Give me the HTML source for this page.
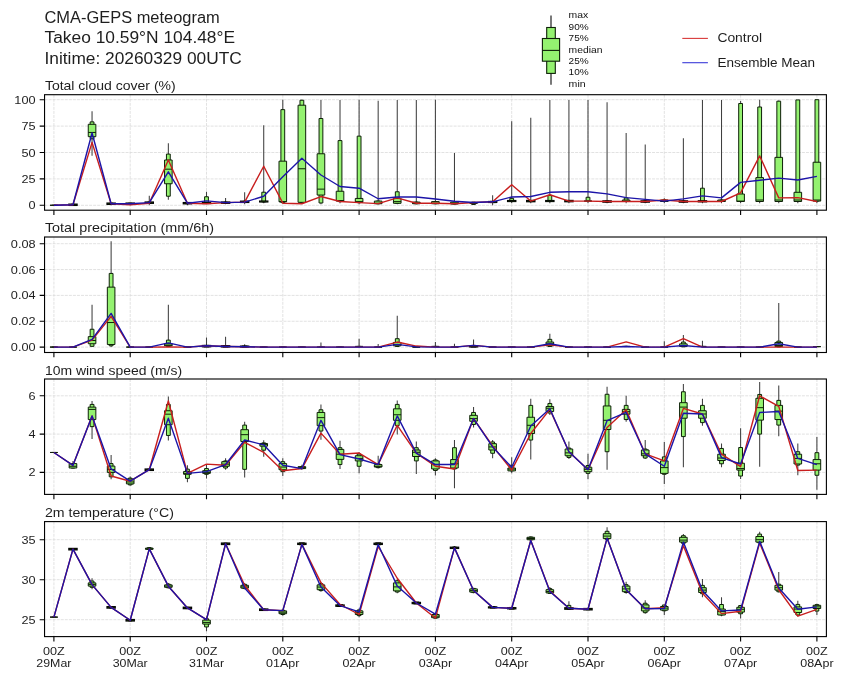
<!DOCTYPE html>
<html><head><meta charset="utf-8"><title>CMA-GEPS meteogram</title>
<style>html,body{margin:0;padding:0;background:#fff;width:844px;height:680px;overflow:hidden}
svg text{font-family:"Liberation Sans",sans-serif} svg{will-change:transform}</style></head>
<body>
<svg width="844" height="680" viewBox="0 0 844 680" style="display:block">
<rect width="844" height="680" fill="#fff"/>
<g font-family="Liberation Sans, sans-serif">
<text x="44.5" y="23" font-size="15.6" text-anchor="start" fill="#1e1e1e" textLength="175.25" lengthAdjust="spacingAndGlyphs">CMA-GEPS meteogram</text>
<text x="44.5" y="43.4" font-size="15.6" text-anchor="start" fill="#1e1e1e" textLength="190.57" lengthAdjust="spacingAndGlyphs">Takeo 10.59°N 104.48°E</text>
<text x="44.5" y="64.3" font-size="15.6" text-anchor="start" fill="#1e1e1e" textLength="197.25" lengthAdjust="spacingAndGlyphs">Initime: 20260329 00UTC</text>
<line x1="551" y1="15.6" x2="551" y2="84.8" stroke="#404040" stroke-width="1.4"/>
<rect x="546.7" y="27.5" width="8.6" height="45.9" fill="#94f270" stroke="#0e2008" stroke-width="1.1"/>
<rect x="542.4" y="38.5" width="17.2" height="22.7" fill="#94f270" stroke="#0e2008" stroke-width="1.1"/>
<line x1="542.4" y1="50.4" x2="559.6" y2="50.4" stroke="#0e2008" stroke-width="1.1"/>
<text x="568.6" y="18.4" font-size="9.2" text-anchor="start" fill="#111" textLength="19.67" lengthAdjust="spacingAndGlyphs">max</text>
<text x="568.6" y="29.77" font-size="9.2" text-anchor="start" fill="#111" textLength="20.07" lengthAdjust="spacingAndGlyphs">90%</text>
<text x="568.6" y="41.14" font-size="9.2" text-anchor="start" fill="#111" textLength="20.07" lengthAdjust="spacingAndGlyphs">75%</text>
<text x="568.6" y="52.51" font-size="9.2" text-anchor="start" fill="#111" textLength="33.85" lengthAdjust="spacingAndGlyphs">median</text>
<text x="568.6" y="63.88" font-size="9.2" text-anchor="start" fill="#111" textLength="20.07" lengthAdjust="spacingAndGlyphs">25%</text>
<text x="568.6" y="75.25" font-size="9.2" text-anchor="start" fill="#111" textLength="20.07" lengthAdjust="spacingAndGlyphs">10%</text>
<text x="568.6" y="86.62" font-size="9.2" text-anchor="start" fill="#111" textLength="17.03" lengthAdjust="spacingAndGlyphs">min</text>
<line x1="682.3" y1="38.4" x2="707.9" y2="38.4" stroke="#d83838" stroke-width="1.1"/>
<line x1="682.3" y1="62.7" x2="707.9" y2="62.7" stroke="#3a3ad8" stroke-width="1.1"/>
<text x="717.4" y="42.4" font-size="12.8" text-anchor="start" fill="#1e1e1e" textLength="44.73" lengthAdjust="spacingAndGlyphs">Control</text>
<text x="717.4" y="66.8" font-size="12.8" text-anchor="start" fill="#1e1e1e" textLength="97.74" lengthAdjust="spacingAndGlyphs">Ensemble Mean</text>
<text x="44.9" y="90.3" font-size="12.4" text-anchor="start" fill="#1e1e1e" textLength="130.8" lengthAdjust="spacingAndGlyphs">Total cloud cover (%)</text>
<path d="M53.9 94.7V210.2M130.2 94.7V210.2M206.5 94.7V210.2M282.8 94.7V210.2M359.1 94.7V210.2M435.4 94.7V210.2M511.7 94.7V210.2M588 94.7V210.2M664.3 94.7V210.2M740.6 94.7V210.2M816.9 94.7V210.2M44.55 205.3H826.4M44.55 178.9H826.4M44.55 152.5H826.4M44.55 126.1H826.4M44.55 99.7H826.4" stroke="#dadada" stroke-width="0.8" stroke-dasharray="3 1.05" fill="none"/>
<path d="M53.9 205.3V205.3M72.97 204.24V205.3M92.05 111.32V155.67M111.12 203.19V205.3M130.2 203.19V205.3M149.28 195.8V205.3M168.35 143.21V199.7M187.43 202.66V205.3M206.5 191.78V203.72M225.57 197.91V204.24M244.65 192.31V204.24M263.72 125.26V203.19M282.8 99.7V203.19M301.88 99.7V203.19M320.95 99.91V204.24M340.02 99.91V203.19M359.1 99.7V204.24M378.17 100.76V204.24M397.25 99.91V204.24M416.32 99.91V204.24M435.4 99.7V204.24M454.47 152.92V204.24M473.55 202.13V204.46M492.62 195.27V205.3M511.7 121.14V203.19M530.77 117.65V203.19M549.85 99.91V203.19M568.92 99.91V203.19M588 99.91V203.19M607.07 102.23V203.19M626.15 132.96V203.19M645.22 144.58V203.19M664.3 198.33V203.19M683.38 138.24V203.19M702.45 99.91V203.19M721.52 99.91V203.19M740.6 101.07V203.19M759.67 99.7V203.19M778.75 100.44V203.19M797.82 99.91V203.19M816.9 99.7V203.19" stroke="#404040" stroke-width="1.05" fill="none"/>
<path d="M52 205.3H55.8V205.3H52Z" fill="none" stroke="#333" stroke-width="1"/>
<path d="M50.1 205.3H57.7V205.3H50.1Z" fill="none" stroke="#333" stroke-width="1"/>
<path d="M71.07 204.24H74.88V205.3H71.07Z" fill="#94f270" stroke="#0e2008" stroke-width="1.0"/>
<path d="M69.17 204.46H76.77V205.09H69.17Z" fill="none" stroke="#000" stroke-width="1.9"/>
<path d="M90.15 121.88H93.95V138.77H90.15Z" fill="#94f270" stroke="#0e2008" stroke-width="1.0"/>
<path d="M88.25 124.3H95.85V136.66H88.25Z" fill="#94f270" stroke="#0e2008" stroke-width="1.0"/>
<path d="M109.22 203.19H113.03V204.24H109.22Z" fill="#94f270" stroke="#0e2008" stroke-width="1.0"/>
<path d="M107.33 203.4H114.92V204.03H107.33Z" fill="none" stroke="#000" stroke-width="1.9"/>
<path d="M128.3 203.19H132.1V204.24H128.3Z" fill="#94f270" stroke="#0e2008" stroke-width="1.0"/>
<path d="M126.4 203.4H134V204.03H126.4Z" fill="none" stroke="#000" stroke-width="1.9"/>
<path d="M147.38 202.13H151.18V203.19H147.38Z" fill="#94f270" stroke="#0e2008" stroke-width="1.0"/>
<path d="M145.47 202.34H153.08V202.98H145.47Z" fill="none" stroke="#000" stroke-width="1.9"/>
<path d="M166.45 154.08H170.25V196.22H166.45Z" fill="#94f270" stroke="#0e2008" stroke-width="1.0"/>
<path d="M164.55 160H172.15V183.76H164.55Z" fill="#94f270" stroke="#0e2008" stroke-width="1.0"/>
<path d="M185.53 202.66H189.33V203.72H185.53Z" fill="#94f270" stroke="#0e2008" stroke-width="1.0"/>
<path d="M183.62 202.87H191.23V203.5H183.62Z" fill="none" stroke="#000" stroke-width="1.9"/>
<path d="M204.6 196.75H208.4V203.19H204.6Z" fill="#94f270" stroke="#0e2008" stroke-width="1.0"/>
<path d="M202.7 202.87H210.3V203.19H202.7Z" fill="none" stroke="#000" stroke-width="1.9"/>
<path d="M223.67 202.13H227.47V203.19H223.67Z" fill="#94f270" stroke="#0e2008" stroke-width="1.0"/>
<path d="M221.77 202.34H229.38V202.98H221.77Z" fill="none" stroke="#000" stroke-width="1.9"/>
<path d="M242.75 201.29H246.55V202.34H242.75Z" fill="#94f270" stroke="#0e2008" stroke-width="1.0"/>
<path d="M240.85 201.5H248.45V202.13H240.85Z" fill="none" stroke="#000" stroke-width="1.9"/>
<path d="M261.82 192.21H265.62V201.92H261.82Z" fill="#94f270" stroke="#0e2008" stroke-width="1.0"/>
<path d="M259.92 201.39H267.52V201.6H259.92Z" fill="none" stroke="#000" stroke-width="1.9"/>
<path d="M280.9 109.63H284.7V202.66H280.9Z" fill="#94f270" stroke="#0e2008" stroke-width="1.0"/>
<path d="M279 161.16H286.6V201.82H279Z" fill="#94f270" stroke="#0e2008" stroke-width="1.0"/>
<path d="M299.98 100.23H303.77V202.66H299.98Z" fill="#94f270" stroke="#0e2008" stroke-width="1.0"/>
<path d="M298.07 105.19H305.68V202.34H298.07Z" fill="#94f270" stroke="#0e2008" stroke-width="1.0"/>
<path d="M319.05 118.5H322.85V202.98H319.05Z" fill="#94f270" stroke="#0e2008" stroke-width="1.0"/>
<path d="M317.15 153.77H324.75V195.06H317.15Z" fill="#94f270" stroke="#0e2008" stroke-width="1.0"/>
<path d="M338.12 140.57H341.92V201.6H338.12Z" fill="#94f270" stroke="#0e2008" stroke-width="1.0"/>
<path d="M336.22 191.26H343.82V201.08H336.22Z" fill="#94f270" stroke="#0e2008" stroke-width="1.0"/>
<path d="M357.2 136.13H361V202.66H357.2Z" fill="#94f270" stroke="#0e2008" stroke-width="1.0"/>
<path d="M355.3 198.44H362.9V202.34H355.3Z" fill="#94f270" stroke="#0e2008" stroke-width="1.0"/>
<path d="M376.27 201.08H380.07V203.72H376.27Z" fill="#94f270" stroke="#0e2008" stroke-width="1.0"/>
<path d="M374.37 201.08H381.97V203.72H374.37Z" fill="#94f270" stroke="#0e2008" stroke-width="1.0"/>
<path d="M395.35 191.78H399.15V203.29H395.35Z" fill="#94f270" stroke="#0e2008" stroke-width="1.0"/>
<path d="M393.45 198.44H401.05V203.29H393.45Z" fill="#94f270" stroke="#0e2008" stroke-width="1.0"/>
<path d="M414.43 202.13H418.22V203.72H414.43Z" fill="#94f270" stroke="#0e2008" stroke-width="1.0"/>
<path d="M412.52 202.13H420.12V203.72H412.52Z" fill="#94f270" stroke="#0e2008" stroke-width="1.0"/>
<path d="M433.5 201.6H437.3V203.72H433.5Z" fill="#94f270" stroke="#0e2008" stroke-width="1.0"/>
<path d="M431.6 201.6H439.2V203.72H431.6Z" fill="#94f270" stroke="#0e2008" stroke-width="1.0"/>
<path d="M452.57 202.13H456.37V204.03H452.57Z" fill="#94f270" stroke="#0e2008" stroke-width="1.0"/>
<path d="M450.67 202.13H458.27V204.03H450.67Z" fill="#94f270" stroke="#0e2008" stroke-width="1.0"/>
<path d="M471.65 202.13H475.45V204.46H471.65Z" fill="#94f270" stroke="#0e2008" stroke-width="1.0"/>
<path d="M469.75 203.29H477.35V203.29H469.75Z" fill="none" stroke="#333" stroke-width="1"/>
<path d="M490.72 201.82H494.52V202.13H490.72Z" fill="none" stroke="#000" stroke-width="1.9"/>
<path d="M488.82 201.82H496.42V202.13H488.82Z" fill="none" stroke="#000" stroke-width="1.9"/>
<path d="M509.8 198.33H513.6V201.08H509.8Z" fill="#94f270" stroke="#0e2008" stroke-width="1.0"/>
<path d="M507.9 200.86H515.5V201.18H507.9Z" fill="none" stroke="#000" stroke-width="1.9"/>
<path d="M528.88 200.55H532.67V201.6H528.88Z" fill="#94f270" stroke="#0e2008" stroke-width="1.0"/>
<path d="M526.98 200.76H534.57V201.39H526.98Z" fill="none" stroke="#000" stroke-width="1.9"/>
<path d="M547.95 195.37H551.75V201.08H547.95Z" fill="#94f270" stroke="#0e2008" stroke-width="1.0"/>
<path d="M546.05 200.86H553.65V201.18H546.05Z" fill="none" stroke="#000" stroke-width="1.9"/>
<path d="M567.02 200.55H570.82V201.6H567.02Z" fill="#94f270" stroke="#0e2008" stroke-width="1.0"/>
<path d="M565.12 200.76H572.72V201.39H565.12Z" fill="none" stroke="#000" stroke-width="1.9"/>
<path d="M586.1 197.27H589.9V201.08H586.1Z" fill="#94f270" stroke="#0e2008" stroke-width="1.0"/>
<path d="M584.2 201.08H591.8V201.08H584.2Z" fill="none" stroke="#333" stroke-width="1"/>
<path d="M605.17 200.97H608.97V202.03H605.17Z" fill="#94f270" stroke="#0e2008" stroke-width="1.0"/>
<path d="M603.27 201.18H610.87V201.82H603.27Z" fill="none" stroke="#000" stroke-width="1.9"/>
<path d="M624.25 197.91H628.05V201.5H624.25Z" fill="#94f270" stroke="#0e2008" stroke-width="1.0"/>
<path d="M622.35 200.02H629.95V201.5H622.35Z" fill="#94f270" stroke="#0e2008" stroke-width="1.0"/>
<path d="M643.32 200.97H647.12V202.03H643.32Z" fill="#94f270" stroke="#0e2008" stroke-width="1.0"/>
<path d="M641.42 201.18H649.02V201.82H641.42Z" fill="none" stroke="#000" stroke-width="1.9"/>
<path d="M662.4 200.02H666.2V201.5H662.4Z" fill="#94f270" stroke="#0e2008" stroke-width="1.0"/>
<path d="M660.5 200.02H668.1V201.5H660.5Z" fill="#94f270" stroke="#0e2008" stroke-width="1.0"/>
<path d="M681.48 200.97H685.27V202.03H681.48Z" fill="#94f270" stroke="#0e2008" stroke-width="1.0"/>
<path d="M679.58 201.18H687.17V201.82H679.58Z" fill="none" stroke="#000" stroke-width="1.9"/>
<path d="M700.55 188.19H704.35V201.5H700.55Z" fill="#94f270" stroke="#0e2008" stroke-width="1.0"/>
<path d="M698.65 201.08H706.25V201.5H698.65Z" fill="none" stroke="#000" stroke-width="1.9"/>
<path d="M719.62 200.02H723.42V201.5H719.62Z" fill="#94f270" stroke="#0e2008" stroke-width="1.0"/>
<path d="M717.73 200.02H725.32V201.5H717.73Z" fill="#94f270" stroke="#0e2008" stroke-width="1.0"/>
<path d="M738.7 103.5H742.5V201.5H738.7Z" fill="#94f270" stroke="#0e2008" stroke-width="1.0"/>
<path d="M736.8 194H744.4V201.5H736.8Z" fill="#94f270" stroke="#0e2008" stroke-width="1.0"/>
<path d="M757.77 106.99H761.57V201.5H757.77Z" fill="#94f270" stroke="#0e2008" stroke-width="1.0"/>
<path d="M755.88 177.63H763.47V201.5H755.88Z" fill="#94f270" stroke="#0e2008" stroke-width="1.0"/>
<path d="M776.85 101.18H780.65V201.5H776.85Z" fill="#94f270" stroke="#0e2008" stroke-width="1.0"/>
<path d="M774.95 157.36H782.55V201.5H774.95Z" fill="#94f270" stroke="#0e2008" stroke-width="1.0"/>
<path d="M795.92 99.91H799.72V201.5H795.92Z" fill="#94f270" stroke="#0e2008" stroke-width="1.0"/>
<path d="M794.02 192.31H801.62V201.5H794.02Z" fill="#94f270" stroke="#0e2008" stroke-width="1.0"/>
<path d="M815 99.7H818.8V201.08H815Z" fill="#94f270" stroke="#0e2008" stroke-width="1.0"/>
<path d="M813.1 162.22H820.7V201.08H813.1Z" fill="#94f270" stroke="#0e2008" stroke-width="1.0"/>
<path d="M50.1 205.3H57.7M69.17 204.77H76.77M88.25 132.44H95.85M107.33 203.72H114.92M126.4 203.72H134M145.47 202.66H153.08M164.55 169.18H172.15M183.62 203.19H191.23M202.7 203.08H210.3M221.77 202.66H229.38M240.85 201.82H248.45M259.92 201.6H267.52M279 201.6H286.6M298.07 168.76H305.68M317.15 189.14H324.75M336.22 200.55H343.82M355.3 201.6H362.9M374.37 203.19H381.97M393.45 201.6H401.05M412.52 203.19H420.12M431.6 203.19H439.2M450.67 203.19H458.27M469.75 203.29H477.35M488.82 202.13H496.42M507.9 201.08H515.5M526.98 201.08H534.57M546.05 201.08H553.65M565.12 201.08H572.72M584.2 201.08H591.8M603.27 201.5H610.87M622.35 201.08H629.95M641.42 201.5H649.02M660.5 201.08H668.1M679.58 201.5H687.17M698.65 201.5H706.25M717.73 201.08H725.32M736.8 201.08H744.4M755.88 200.02H763.47M774.95 200.02H782.55M794.02 200.02H801.62M813.1 200.02H820.7" stroke="#0e2008" stroke-width="1.0" fill="none"/>
<path d="M53.9 205.3L72.97 204.77L92.05 142.36L111.12 203.72L130.2 204.77L149.28 203.19L168.35 160L187.43 203.19L206.5 203.72L225.57 202.66L244.65 202.13L263.72 166.23L282.8 203.19L301.88 203.72L320.95 196.54L340.02 201.5L359.1 202.66L378.17 203.61L397.25 197.91L416.32 203.29L435.4 203.29L454.47 203.82L473.55 202.45L492.62 201.82L511.7 184.71L530.77 201.08L549.85 194.74L568.92 201.08L588 201.08L607.07 201.5L626.15 201.5L645.22 201.5L664.3 200.02L683.38 201.5L702.45 201.5L721.52 201.5L740.6 192.94L759.67 155.88L778.75 197.91L797.82 197.59L816.9 201.5" stroke="#c81e1e" stroke-width="1.4" fill="none" stroke-linejoin="round"/>
<path d="M53.9 205.3L72.97 204.77L92.05 132.96L111.12 203.72L130.2 203.72L149.28 202.66L168.35 171.82L187.43 203.19L206.5 200.86L225.57 202.66L244.65 202.13L263.72 196.22L282.8 176.79L301.88 158.2L320.95 174.99L340.02 186.5L359.1 188.19L378.17 198.75L397.25 197.06L416.32 197.06L435.4 198.96L454.47 201.18L473.55 202.45L492.62 201.82L511.7 196.96L530.77 196.54L549.85 192.31L568.92 191.78L588 191.78L607.07 193.9L626.15 197.59L645.22 199.39L664.3 201.08L683.38 198.86L702.45 195.9L721.52 197.91L740.6 182.38L759.67 180.27L778.75 178.16L797.82 179.96L816.9 176.37" stroke="#1c14a8" stroke-width="1.4" fill="none" stroke-linejoin="round"/>
<rect x="44.55" y="94.7" width="781.85" height="115.5" fill="none" stroke="#000" stroke-width="1.11"/>
<path d="M53.9 210.2v4.86M130.2 210.2v4.86M206.5 210.2v4.86M282.8 210.2v4.86M359.1 210.2v4.86M435.4 210.2v4.86M511.7 210.2v4.86M588 210.2v4.86M664.3 210.2v4.86M740.6 210.2v4.86M816.9 210.2v4.86M44.55 205.3h-4.86M44.55 178.9h-4.86M44.55 152.5h-4.86M44.55 126.1h-4.86M44.55 99.7h-4.86" stroke="#000" stroke-width="1.11" fill="none"/>
<text x="35.6" y="209.3" font-size="11.5" text-anchor="end" fill="#1e1e1e" textLength="7.07" lengthAdjust="spacingAndGlyphs">0</text>
<text x="35.6" y="182.9" font-size="11.5" text-anchor="end" fill="#1e1e1e" textLength="14.14" lengthAdjust="spacingAndGlyphs">25</text>
<text x="35.6" y="156.5" font-size="11.5" text-anchor="end" fill="#1e1e1e" textLength="14.14" lengthAdjust="spacingAndGlyphs">50</text>
<text x="35.6" y="130.1" font-size="11.5" text-anchor="end" fill="#1e1e1e" textLength="14.14" lengthAdjust="spacingAndGlyphs">75</text>
<text x="35.6" y="103.7" font-size="11.5" text-anchor="end" fill="#1e1e1e" textLength="21.21" lengthAdjust="spacingAndGlyphs">100</text>
<text x="44.9" y="232.1" font-size="12.4" text-anchor="start" fill="#1e1e1e" textLength="169.03" lengthAdjust="spacingAndGlyphs">Total precipitation (mm/6h)</text>
<path d="M53.9 237V352.5M130.2 237V352.5M206.5 237V352.5M282.8 237V352.5M359.1 237V352.5M435.4 237V352.5M511.7 237V352.5M588 237V352.5M664.3 237V352.5M740.6 237V352.5M816.9 237V352.5M44.55 347.1H826.4M44.55 321.25H826.4M44.55 295.4H826.4M44.55 269.55H826.4M44.55 243.7H826.4" stroke="#dadada" stroke-width="0.8" stroke-dasharray="3 1.05" fill="none"/>
<path d="M53.9 347.1V347.1M72.97 347.1V347.1M92.05 304.84V347.1M111.12 241.24V347.1M130.2 347.1V347.1M149.28 347.1V347.1M168.35 304.84V347.1M187.43 347.1V347.1M206.5 337.54V347.1M225.57 336.76V347.1M244.65 344.26V347.1M263.72 347.1V347.1M282.8 347.1V347.1M301.88 347.1V347.1M320.95 342.45V347.1M340.02 347.1V347.1M359.1 338.7V347.1M378.17 344V347.1M397.25 315.82V347.1M416.32 347.1V347.1M435.4 341.93V347.1M454.47 343.74V347.1M473.55 339.47V347.1M492.62 347.1V347.1M511.7 347.1V347.1M530.77 347.1V347.1M549.85 333.79V347.1M568.92 347.1V347.1M588 347.1V347.1M607.07 347.1V347.1M626.15 345.81V347.1M645.22 347.1V347.1M664.3 341.15V347.1M683.38 334.95V347.1M702.45 340.64V347.1M721.52 347.1V347.1M740.6 347.1V347.1M759.67 347.1V347.1M778.75 302.9V347.1M797.82 347.1V347.1M816.9 346.45V347.1" stroke="#404040" stroke-width="1.05" fill="none"/>
<path d="M52 347.1H55.8V347.1H52Z" fill="none" stroke="#333" stroke-width="1"/>
<path d="M50.1 347.1H57.7V347.1H50.1Z" fill="none" stroke="#333" stroke-width="1"/>
<path d="M71.07 347.1H74.88V347.1H71.07Z" fill="none" stroke="#333" stroke-width="1"/>
<path d="M69.17 347.1H76.77V347.1H69.17Z" fill="none" stroke="#333" stroke-width="1"/>
<path d="M90.15 329.26H93.95V346.32H90.15Z" fill="#94f270" stroke="#0e2008" stroke-width="1.0"/>
<path d="M88.25 336.63H95.85V343.74H88.25Z" fill="#94f270" stroke="#0e2008" stroke-width="1.0"/>
<path d="M109.22 273.43H113.03V345.81H109.22Z" fill="#94f270" stroke="#0e2008" stroke-width="1.0"/>
<path d="M107.33 287.13H114.92V344.52H107.33Z" fill="#94f270" stroke="#0e2008" stroke-width="1.0"/>
<path d="M128.3 347.1H132.1V347.1H128.3Z" fill="none" stroke="#333" stroke-width="1"/>
<path d="M126.4 347.1H134V347.1H126.4Z" fill="none" stroke="#333" stroke-width="1"/>
<path d="M147.38 347.1H151.18V347.1H147.38Z" fill="none" stroke="#333" stroke-width="1"/>
<path d="M145.47 347.1H153.08V347.1H145.47Z" fill="none" stroke="#333" stroke-width="1"/>
<path d="M166.45 340.12H170.25V346.45H166.45Z" fill="#94f270" stroke="#0e2008" stroke-width="1.0"/>
<path d="M164.55 343.74H172.15V345.81H164.55Z" fill="#94f270" stroke="#0e2008" stroke-width="1.0"/>
<path d="M185.53 347.1H189.33V347.1H185.53Z" fill="none" stroke="#333" stroke-width="1"/>
<path d="M183.62 347.1H191.23V347.1H183.62Z" fill="none" stroke="#333" stroke-width="1"/>
<path d="M204.6 345.81H208.4V346.45H204.6Z" fill="none" stroke="#000" stroke-width="1.9"/>
<path d="M202.7 345.81H210.3V346.45H202.7Z" fill="none" stroke="#000" stroke-width="1.9"/>
<path d="M223.67 346.07H227.47V346.58H223.67Z" fill="none" stroke="#000" stroke-width="1.9"/>
<path d="M221.77 346.07H229.38V346.58H221.77Z" fill="none" stroke="#000" stroke-width="1.9"/>
<path d="M242.75 346.45H246.55V346.71H242.75Z" fill="none" stroke="#000" stroke-width="1.9"/>
<path d="M240.85 346.45H248.45V346.71H240.85Z" fill="none" stroke="#000" stroke-width="1.9"/>
<path d="M261.82 347.1H265.62V347.1H261.82Z" fill="none" stroke="#333" stroke-width="1"/>
<path d="M259.92 347.1H267.52V347.1H259.92Z" fill="none" stroke="#333" stroke-width="1"/>
<path d="M280.9 347.1H284.7V347.1H280.9Z" fill="none" stroke="#333" stroke-width="1"/>
<path d="M279 347.1H286.6V347.1H279Z" fill="none" stroke="#333" stroke-width="1"/>
<path d="M299.98 347.1H303.77V347.1H299.98Z" fill="none" stroke="#333" stroke-width="1"/>
<path d="M298.07 347.1H305.68V347.1H298.07Z" fill="none" stroke="#333" stroke-width="1"/>
<path d="M319.05 347.1H322.85V347.1H319.05Z" fill="none" stroke="#333" stroke-width="1"/>
<path d="M317.15 347.1H324.75V347.1H317.15Z" fill="none" stroke="#333" stroke-width="1"/>
<path d="M338.12 347.1H341.92V347.1H338.12Z" fill="none" stroke="#333" stroke-width="1"/>
<path d="M336.22 347.1H343.82V347.1H336.22Z" fill="none" stroke="#333" stroke-width="1"/>
<path d="M357.2 346.45H361V346.45H357.2Z" fill="none" stroke="#333" stroke-width="1"/>
<path d="M355.3 346.45H362.9V346.45H355.3Z" fill="none" stroke="#333" stroke-width="1"/>
<path d="M376.27 347.1H380.07V347.1H376.27Z" fill="none" stroke="#333" stroke-width="1"/>
<path d="M374.37 347.1H381.97V347.1H374.37Z" fill="none" stroke="#333" stroke-width="1"/>
<path d="M395.35 338.7H399.15V346.45H395.35Z" fill="#94f270" stroke="#0e2008" stroke-width="1.0"/>
<path d="M393.45 342.45H401.05V345.81H393.45Z" fill="#94f270" stroke="#0e2008" stroke-width="1.0"/>
<path d="M414.43 347.1H418.22V347.1H414.43Z" fill="none" stroke="#333" stroke-width="1"/>
<path d="M412.52 347.1H420.12V347.1H412.52Z" fill="none" stroke="#333" stroke-width="1"/>
<path d="M433.5 346.45H437.3V346.45H433.5Z" fill="none" stroke="#333" stroke-width="1"/>
<path d="M431.6 346.45H439.2V346.45H431.6Z" fill="none" stroke="#333" stroke-width="1"/>
<path d="M452.57 347.1H456.37V347.1H452.57Z" fill="none" stroke="#333" stroke-width="1"/>
<path d="M450.67 347.1H458.27V347.1H450.67Z" fill="none" stroke="#333" stroke-width="1"/>
<path d="M471.65 346.07H475.45V346.58H471.65Z" fill="none" stroke="#000" stroke-width="1.9"/>
<path d="M469.75 346.07H477.35V346.58H469.75Z" fill="none" stroke="#000" stroke-width="1.9"/>
<path d="M490.72 347.1H494.52V347.1H490.72Z" fill="none" stroke="#333" stroke-width="1"/>
<path d="M488.82 347.1H496.42V347.1H488.82Z" fill="none" stroke="#333" stroke-width="1"/>
<path d="M509.8 347.1H513.6V347.1H509.8Z" fill="none" stroke="#333" stroke-width="1"/>
<path d="M507.9 347.1H515.5V347.1H507.9Z" fill="none" stroke="#333" stroke-width="1"/>
<path d="M528.88 347.1H532.67V347.1H528.88Z" fill="none" stroke="#333" stroke-width="1"/>
<path d="M526.98 347.1H534.57V347.1H526.98Z" fill="none" stroke="#333" stroke-width="1"/>
<path d="M547.95 339.35H551.75V346.45H547.95Z" fill="#94f270" stroke="#0e2008" stroke-width="1.0"/>
<path d="M546.05 342.06H553.65V345.81H546.05Z" fill="#94f270" stroke="#0e2008" stroke-width="1.0"/>
<path d="M567.02 347.1H570.82V347.1H567.02Z" fill="none" stroke="#333" stroke-width="1"/>
<path d="M565.12 347.1H572.72V347.1H565.12Z" fill="none" stroke="#333" stroke-width="1"/>
<path d="M586.1 347.1H589.9V347.1H586.1Z" fill="none" stroke="#333" stroke-width="1"/>
<path d="M584.2 347.1H591.8V347.1H584.2Z" fill="none" stroke="#333" stroke-width="1"/>
<path d="M605.17 347.1H608.97V347.1H605.17Z" fill="none" stroke="#333" stroke-width="1"/>
<path d="M603.27 347.1H610.87V347.1H603.27Z" fill="none" stroke="#333" stroke-width="1"/>
<path d="M624.25 346.45H628.05V346.45H624.25Z" fill="none" stroke="#333" stroke-width="1"/>
<path d="M622.35 346.45H629.95V346.45H622.35Z" fill="none" stroke="#333" stroke-width="1"/>
<path d="M643.32 347.1H647.12V347.1H643.32Z" fill="none" stroke="#333" stroke-width="1"/>
<path d="M641.42 347.1H649.02V347.1H641.42Z" fill="none" stroke="#333" stroke-width="1"/>
<path d="M662.4 347.1H666.2V347.1H662.4Z" fill="none" stroke="#333" stroke-width="1"/>
<path d="M660.5 347.1H668.1V347.1H660.5Z" fill="none" stroke="#333" stroke-width="1"/>
<path d="M681.48 342.06H685.27V346.84H681.48Z" fill="#94f270" stroke="#0e2008" stroke-width="1.0"/>
<path d="M679.58 343.87H687.17V346.45H679.58Z" fill="#94f270" stroke="#0e2008" stroke-width="1.0"/>
<path d="M700.55 346.45H704.35V346.45H700.55Z" fill="none" stroke="#333" stroke-width="1"/>
<path d="M698.65 346.45H706.25V346.45H698.65Z" fill="none" stroke="#333" stroke-width="1"/>
<path d="M719.62 347.1H723.42V347.1H719.62Z" fill="none" stroke="#333" stroke-width="1"/>
<path d="M717.73 347.1H725.32V347.1H717.73Z" fill="none" stroke="#333" stroke-width="1"/>
<path d="M738.7 347.1H742.5V347.1H738.7Z" fill="none" stroke="#333" stroke-width="1"/>
<path d="M736.8 347.1H744.4V347.1H736.8Z" fill="none" stroke="#333" stroke-width="1"/>
<path d="M757.77 347.1H761.57V347.1H757.77Z" fill="none" stroke="#333" stroke-width="1"/>
<path d="M755.88 347.1H763.47V347.1H755.88Z" fill="none" stroke="#333" stroke-width="1"/>
<path d="M776.85 341.15H780.65V346.84H776.85Z" fill="#94f270" stroke="#0e2008" stroke-width="1.0"/>
<path d="M774.95 342.45H782.55V346.45H774.95Z" fill="#94f270" stroke="#0e2008" stroke-width="1.0"/>
<path d="M795.92 347.1H799.72V347.1H795.92Z" fill="none" stroke="#333" stroke-width="1"/>
<path d="M794.02 347.1H801.62V347.1H794.02Z" fill="none" stroke="#333" stroke-width="1"/>
<path d="M815 346.58H818.8V346.58H815Z" fill="none" stroke="#333" stroke-width="1"/>
<path d="M813.1 346.58H820.7V346.58H813.1Z" fill="none" stroke="#333" stroke-width="1"/>
<path d="M50.1 347.1H57.7M69.17 347.1H76.77M88.25 340.51H95.85M107.33 322.54H114.92M126.4 347.1H134M145.47 347.1H153.08M164.55 345.16H172.15M183.62 347.1H191.23M202.7 346.07H210.3M221.77 346.32H229.38M240.85 346.58H248.45M259.92 347.1H267.52M279 347.1H286.6M298.07 347.1H305.68M317.15 347.1H324.75M336.22 347.1H343.82M355.3 346.45H362.9M374.37 347.1H381.97M393.45 344.52H401.05M412.52 347.1H420.12M431.6 346.45H439.2M450.67 347.1H458.27M469.75 346.32H477.35M488.82 347.1H496.42M507.9 347.1H515.5M526.98 347.1H534.57M546.05 343.87H553.65M565.12 347.1H572.72M584.2 347.1H591.8M603.27 347.1H610.87M622.35 346.45H629.95M641.42 347.1H649.02M660.5 347.1H668.1M679.58 345.81H687.17M698.65 346.45H706.25M717.73 347.1H725.32M736.8 347.1H744.4M755.88 347.1H763.47M774.95 345.55H782.55M794.02 347.1H801.62M813.1 346.58H820.7" stroke="#0e2008" stroke-width="1.0" fill="none"/>
<path d="M53.9 347.1L72.97 347.1L92.05 340.12L111.12 316.34L130.2 347.1L149.28 347.1L168.35 346.97L187.43 347.1L206.5 345.81L225.57 346.45L244.65 346.71L263.72 347.1L282.8 347.1L301.88 347.1L320.95 347.1L340.02 347.1L359.1 347.1L378.17 347.1L397.25 342.06L416.32 346.07L435.4 347.1L454.47 347.1L473.55 345.42L492.62 347.1L511.7 347.1L530.77 347.1L549.85 344.9L568.92 347.1L588 347.1L607.07 347.1L626.15 341.93L645.22 347.1L664.3 347.1L683.38 338.7L702.45 347.1L721.52 347.1L740.6 347.1L759.67 347.1L778.75 347.1L797.82 347.1L816.9 347.1" stroke="#c81e1e" stroke-width="1.4" fill="none" stroke-linejoin="round"/>
<path d="M53.9 347.1L72.97 347.1L92.05 339.35L111.12 313.37L130.2 347.1L149.28 347.1L168.35 342.83L187.43 347.1L206.5 345.81L225.57 346.45L244.65 346.71L263.72 347.1L282.8 347.1L301.88 347.1L320.95 347.1L340.02 347.1L359.1 347.1L378.17 347.1L397.25 344.39L416.32 346.84L435.4 347.1L454.47 347.1L473.55 345.42L492.62 347.1L511.7 347.1L530.77 347.1L549.85 343.74L568.92 347.1L588 347.1L607.07 347.1L626.15 346.45L645.22 347.1L664.3 347.1L683.38 345.55L702.45 347.1L721.52 347.1L740.6 347.1L759.67 347.1L778.75 343.74L797.82 347.1L816.9 347.1" stroke="#1c14a8" stroke-width="1.4" fill="none" stroke-linejoin="round"/>
<rect x="44.55" y="237" width="781.85" height="115.5" fill="none" stroke="#000" stroke-width="1.11"/>
<path d="M53.9 352.5v4.86M130.2 352.5v4.86M206.5 352.5v4.86M282.8 352.5v4.86M359.1 352.5v4.86M435.4 352.5v4.86M511.7 352.5v4.86M588 352.5v4.86M664.3 352.5v4.86M740.6 352.5v4.86M816.9 352.5v4.86M44.55 347.1h-4.86M44.55 321.25h-4.86M44.55 295.4h-4.86M44.55 269.55h-4.86M44.55 243.7h-4.86" stroke="#000" stroke-width="1.11" fill="none"/>
<text x="35.6" y="351.1" font-size="11.5" text-anchor="end" fill="#1e1e1e" textLength="24.74" lengthAdjust="spacingAndGlyphs">0.00</text>
<text x="35.6" y="325.25" font-size="11.5" text-anchor="end" fill="#1e1e1e" textLength="24.74" lengthAdjust="spacingAndGlyphs">0.02</text>
<text x="35.6" y="299.4" font-size="11.5" text-anchor="end" fill="#1e1e1e" textLength="24.74" lengthAdjust="spacingAndGlyphs">0.04</text>
<text x="35.6" y="273.55" font-size="11.5" text-anchor="end" fill="#1e1e1e" textLength="24.74" lengthAdjust="spacingAndGlyphs">0.06</text>
<text x="35.6" y="247.7" font-size="11.5" text-anchor="end" fill="#1e1e1e" textLength="24.74" lengthAdjust="spacingAndGlyphs">0.08</text>
<text x="44.9" y="374.8" font-size="12.4" text-anchor="start" fill="#1e1e1e" textLength="137.17" lengthAdjust="spacingAndGlyphs">10m wind speed (m/s)</text>
<path d="M53.9 379V494.4M130.2 379V494.4M206.5 379V494.4M282.8 379V494.4M359.1 379V494.4M435.4 379V494.4M511.7 379V494.4M588 379V494.4M664.3 379V494.4M740.6 379V494.4M816.9 379V494.4M44.55 472.4H826.4M44.55 434.1H826.4M44.55 395.8H826.4" stroke="#dadada" stroke-width="0.8" stroke-dasharray="3 1.05" fill="none"/>
<path d="M53.9 452.48V452.48M72.97 460.91V468.57M92.05 400.97V438.89M111.12 454.97V479.29M130.2 476.42V485.8M149.28 468.95V470.48M168.35 396.57V440.61M187.43 465.31V482.17M206.5 464.55V478.53M225.57 458.23V469.72M244.65 421.65V477.38M263.72 440.23V456.7M282.8 458.23V476.04M301.88 464.74V469.72M320.95 404.42V439.84M340.02 440.8V468.95M359.1 452.29V473.36M378.17 455.74V468.57M397.25 400.59V434.48M416.32 441.38V474.12M435.4 458.23V475.46M454.47 440.04V488.29M473.55 407.1V427.4M492.62 440.04V458.23M511.7 457.27V473.36M530.77 398.86V459.57M549.85 399.25V414.95M568.92 441.38V458.99M588 453.82V479.29M607.07 386.8V469.72M626.15 395.8V421.65M645.22 440.04V458.99M664.3 441.95V484.08M683.38 384.12V467.23M702.45 398.86V425.87M721.52 443.48V467.23M740.6 428.35V479.1M759.67 382.01V466.85M778.75 385.46V436.21M797.82 443.48V475.27M816.9 436.97V489.63" stroke="#404040" stroke-width="1.05" fill="none"/>
<path d="M52 452.48H55.8V452.48H52Z" fill="none" stroke="#333" stroke-width="1"/>
<path d="M50.1 452.48H57.7V452.48H50.1Z" fill="none" stroke="#333" stroke-width="1"/>
<path d="M71.07 463.59H74.88V468H71.07Z" fill="#94f270" stroke="#0e2008" stroke-width="1.0"/>
<path d="M69.17 463.59H76.77V468H69.17Z" fill="#94f270" stroke="#0e2008" stroke-width="1.0"/>
<path d="M90.15 404.42H93.95V426.63H90.15Z" fill="#94f270" stroke="#0e2008" stroke-width="1.0"/>
<path d="M88.25 407.1H95.85V419.55H88.25Z" fill="#94f270" stroke="#0e2008" stroke-width="1.0"/>
<path d="M109.22 463.59H113.03V476.8H109.22Z" fill="#94f270" stroke="#0e2008" stroke-width="1.0"/>
<path d="M107.33 466.08H114.92V472.4H107.33Z" fill="#94f270" stroke="#0e2008" stroke-width="1.0"/>
<path d="M128.3 478.14H132.1V484.85H128.3Z" fill="#94f270" stroke="#0e2008" stroke-width="1.0"/>
<path d="M126.4 479.1H134V483.89H126.4Z" fill="#94f270" stroke="#0e2008" stroke-width="1.0"/>
<path d="M147.38 469.14H151.18V470.29H147.38Z" fill="#94f270" stroke="#0e2008" stroke-width="1.0"/>
<path d="M145.47 469.34H153.08V470.1H145.47Z" fill="none" stroke="#000" stroke-width="1.9"/>
<path d="M166.45 404.42H170.25V435.44H166.45Z" fill="#94f270" stroke="#0e2008" stroke-width="1.0"/>
<path d="M164.55 410.74H172.15V424.72H164.55Z" fill="#94f270" stroke="#0e2008" stroke-width="1.0"/>
<path d="M185.53 469.14H189.33V478.34H185.53Z" fill="#94f270" stroke="#0e2008" stroke-width="1.0"/>
<path d="M183.62 471.44H191.23V474.31H183.62Z" fill="#94f270" stroke="#0e2008" stroke-width="1.0"/>
<path d="M204.6 468.57H208.4V474.31H204.6Z" fill="#94f270" stroke="#0e2008" stroke-width="1.0"/>
<path d="M202.7 470.68H210.3V473.36H202.7Z" fill="#94f270" stroke="#0e2008" stroke-width="1.0"/>
<path d="M223.67 460.91H227.47V468H223.67Z" fill="#94f270" stroke="#0e2008" stroke-width="1.0"/>
<path d="M221.77 461.68H229.38V466.27H221.77Z" fill="#94f270" stroke="#0e2008" stroke-width="1.0"/>
<path d="M242.75 425.1H246.55V469.34H242.75Z" fill="#94f270" stroke="#0e2008" stroke-width="1.0"/>
<path d="M240.85 429.7H248.45V441.57H240.85Z" fill="#94f270" stroke="#0e2008" stroke-width="1.0"/>
<path d="M261.82 442.91H265.62V450.19H261.82Z" fill="#94f270" stroke="#0e2008" stroke-width="1.0"/>
<path d="M259.92 443.48H267.52V446.16H259.92Z" fill="#94f270" stroke="#0e2008" stroke-width="1.0"/>
<path d="M280.9 461.68H284.7V471.63H280.9Z" fill="#94f270" stroke="#0e2008" stroke-width="1.0"/>
<path d="M279 463.59H286.6V469.72H279Z" fill="#94f270" stroke="#0e2008" stroke-width="1.0"/>
<path d="M299.98 466.65H303.77V468.57H299.98Z" fill="#94f270" stroke="#0e2008" stroke-width="1.0"/>
<path d="M298.07 466.65H305.68V468.57H298.07Z" fill="#94f270" stroke="#0e2008" stroke-width="1.0"/>
<path d="M319.05 409.78H322.85V431.04H319.05Z" fill="#94f270" stroke="#0e2008" stroke-width="1.0"/>
<path d="M317.15 412.46H324.75V425.67H317.15Z" fill="#94f270" stroke="#0e2008" stroke-width="1.0"/>
<path d="M338.12 447.7H341.92V464.55H338.12Z" fill="#94f270" stroke="#0e2008" stroke-width="1.0"/>
<path d="M336.22 449.42H343.82V459.38H336.22Z" fill="#94f270" stroke="#0e2008" stroke-width="1.0"/>
<path d="M357.2 454.02H361V466.27H357.2Z" fill="#94f270" stroke="#0e2008" stroke-width="1.0"/>
<path d="M355.3 455.74H362.9V460.91H355.3Z" fill="#94f270" stroke="#0e2008" stroke-width="1.0"/>
<path d="M376.27 463.78H380.07V467.61H376.27Z" fill="#94f270" stroke="#0e2008" stroke-width="1.0"/>
<path d="M374.37 464.55H381.97V467.04H374.37Z" fill="#94f270" stroke="#0e2008" stroke-width="1.0"/>
<path d="M395.35 404.42H399.15V425.67H395.35Z" fill="#94f270" stroke="#0e2008" stroke-width="1.0"/>
<path d="M393.45 408.82H401.05V420.31H393.45Z" fill="#94f270" stroke="#0e2008" stroke-width="1.0"/>
<path d="M414.43 447.7H418.22V460.91H414.43Z" fill="#94f270" stroke="#0e2008" stroke-width="1.0"/>
<path d="M412.52 449.99H420.12V456.51H412.52Z" fill="#94f270" stroke="#0e2008" stroke-width="1.0"/>
<path d="M433.5 459.95H437.3V470.48H433.5Z" fill="#94f270" stroke="#0e2008" stroke-width="1.0"/>
<path d="M431.6 460.91H439.2V468.95H431.6Z" fill="#94f270" stroke="#0e2008" stroke-width="1.0"/>
<path d="M452.57 447.7H456.37V468.95H452.57Z" fill="#94f270" stroke="#0e2008" stroke-width="1.0"/>
<path d="M450.67 459.57H458.27V468H450.67Z" fill="#94f270" stroke="#0e2008" stroke-width="1.0"/>
<path d="M471.65 412.46H475.45V424.52H471.65Z" fill="#94f270" stroke="#0e2008" stroke-width="1.0"/>
<path d="M469.75 415.33H477.35V421.27H469.75Z" fill="#94f270" stroke="#0e2008" stroke-width="1.0"/>
<path d="M490.72 441.95H494.52V453.25H490.72Z" fill="#94f270" stroke="#0e2008" stroke-width="1.0"/>
<path d="M488.82 443.67H496.42V449.99H488.82Z" fill="#94f270" stroke="#0e2008" stroke-width="1.0"/>
<path d="M509.8 465.31H513.6V470.87H509.8Z" fill="#94f270" stroke="#0e2008" stroke-width="1.0"/>
<path d="M507.9 468H515.5V470.87H507.9Z" fill="#94f270" stroke="#0e2008" stroke-width="1.0"/>
<path d="M528.88 405.38H532.67V440.04H528.88Z" fill="#94f270" stroke="#0e2008" stroke-width="1.0"/>
<path d="M526.98 417.25H534.57V433.53H526.98Z" fill="#94f270" stroke="#0e2008" stroke-width="1.0"/>
<path d="M547.95 403.46H551.75V413.03H547.95Z" fill="#94f270" stroke="#0e2008" stroke-width="1.0"/>
<path d="M546.05 406.52H553.65V411.5H546.05Z" fill="#94f270" stroke="#0e2008" stroke-width="1.0"/>
<path d="M567.02 448.08H570.82V457.46H567.02Z" fill="#94f270" stroke="#0e2008" stroke-width="1.0"/>
<path d="M565.12 449.04H572.72V455.74H565.12Z" fill="#94f270" stroke="#0e2008" stroke-width="1.0"/>
<path d="M586.1 465.51H589.9V473.36H586.1Z" fill="#94f270" stroke="#0e2008" stroke-width="1.0"/>
<path d="M584.2 467.23H591.8V471.63H584.2Z" fill="#94f270" stroke="#0e2008" stroke-width="1.0"/>
<path d="M605.17 394.27H608.97V451.72H605.17Z" fill="#94f270" stroke="#0e2008" stroke-width="1.0"/>
<path d="M603.27 405.95H610.87V429.5H603.27Z" fill="#94f270" stroke="#0e2008" stroke-width="1.0"/>
<path d="M624.25 405.38H628.05V419.55H624.25Z" fill="#94f270" stroke="#0e2008" stroke-width="1.0"/>
<path d="M622.35 409.4H629.95V414.18H622.35Z" fill="#94f270" stroke="#0e2008" stroke-width="1.0"/>
<path d="M643.32 449.04H647.12V458.04H643.32Z" fill="#94f270" stroke="#0e2008" stroke-width="1.0"/>
<path d="M641.42 449.99H649.02V455.74H641.42Z" fill="#94f270" stroke="#0e2008" stroke-width="1.0"/>
<path d="M662.4 456.89H666.2V474.31H662.4Z" fill="#94f270" stroke="#0e2008" stroke-width="1.0"/>
<path d="M660.5 460.91H668.1V473.36H660.5Z" fill="#94f270" stroke="#0e2008" stroke-width="1.0"/>
<path d="M681.48 391.78H685.27V436.59H681.48Z" fill="#94f270" stroke="#0e2008" stroke-width="1.0"/>
<path d="M679.58 402.69H687.17V418.21H679.58Z" fill="#94f270" stroke="#0e2008" stroke-width="1.0"/>
<path d="M700.55 405.38H704.35V422.61H700.55Z" fill="#94f270" stroke="#0e2008" stroke-width="1.0"/>
<path d="M698.65 410.74H706.25V418.21H698.65Z" fill="#94f270" stroke="#0e2008" stroke-width="1.0"/>
<path d="M719.62 448.46H723.42V463.78H719.62Z" fill="#94f270" stroke="#0e2008" stroke-width="1.0"/>
<path d="M717.73 454.21H725.32V460.53H717.73Z" fill="#94f270" stroke="#0e2008" stroke-width="1.0"/>
<path d="M738.7 447.5H742.5V476.04H738.7Z" fill="#94f270" stroke="#0e2008" stroke-width="1.0"/>
<path d="M736.8 463.21H744.4V470.1H736.8Z" fill="#94f270" stroke="#0e2008" stroke-width="1.0"/>
<path d="M757.77 394.46H761.57V434.1H757.77Z" fill="#94f270" stroke="#0e2008" stroke-width="1.0"/>
<path d="M755.88 398.29H763.47V420.12H755.88Z" fill="#94f270" stroke="#0e2008" stroke-width="1.0"/>
<path d="M776.85 400.4H780.65V425.1H776.85Z" fill="#94f270" stroke="#0e2008" stroke-width="1.0"/>
<path d="M774.95 405.38H782.55V419.55H774.95Z" fill="#94f270" stroke="#0e2008" stroke-width="1.0"/>
<path d="M795.92 451.72H799.72V465.12H795.92Z" fill="#94f270" stroke="#0e2008" stroke-width="1.0"/>
<path d="M794.02 454.21H801.62V463.97H794.02Z" fill="#94f270" stroke="#0e2008" stroke-width="1.0"/>
<path d="M815 452.68H818.8V475.27H815Z" fill="#94f270" stroke="#0e2008" stroke-width="1.0"/>
<path d="M813.1 459.57H820.7V470.1H813.1Z" fill="#94f270" stroke="#0e2008" stroke-width="1.0"/>
<path d="M50.1 452.48H57.7M69.17 466.27H76.77M88.25 409.4H95.85M107.33 469.53H114.92M126.4 481.97H134M145.47 469.72H153.08M164.55 414.18H172.15M183.62 473.36H191.23M202.7 472.4H210.3M221.77 464.17H229.38M240.85 434.67H248.45M259.92 444.63H267.52M279 467.04H286.6M298.07 467.61H305.68M317.15 417.63H324.75M336.22 454.21H343.82M355.3 458.42H362.9M374.37 466.27H381.97M393.45 414.76H401.05M412.52 452.29H420.12M431.6 464.55H439.2M450.67 463.78H458.27M469.75 418.59H477.35M488.82 446.93H496.42M507.9 469.14H515.5M526.98 425.29H534.57M546.05 408.25H553.65M565.12 452.87H572.72M584.2 469.34H591.8M603.27 420.31H610.87M622.35 411.69H629.95M641.42 453.82H649.02M660.5 467.61H668.1M679.58 407.1H687.17M698.65 413.99H706.25M717.73 458.04H725.32M736.8 468.57H744.4M755.88 407.67H763.47M774.95 411.12H782.55M794.02 458.42H801.62M813.1 463.78H820.7" stroke="#0e2008" stroke-width="1.0" fill="none"/>
<path d="M53.9 452.48L72.97 465.31L92.05 415.91L111.12 476.04L130.2 481.21L149.28 469.72L168.35 400.97L187.43 473.36L206.5 464.17L225.57 465.31L244.65 442.33L263.72 452.29L282.8 470.68L301.88 468.57L320.95 433.14L340.02 454.21L359.1 453.06L378.17 464.55L397.25 425.29L416.32 453.06L435.4 466.27L454.47 468.95L473.55 418.59L492.62 445.97L511.7 470.1L530.77 433.53L549.85 409.4L568.92 451.72L588 469.72L607.07 427.4L626.15 409.78L645.22 453.82L664.3 460.91L683.38 408.44L702.45 413.99L721.52 454.21L740.6 466.65L759.67 395.8L778.75 406.33L797.82 470.48L816.9 470.1" stroke="#c81e1e" stroke-width="1.4" fill="none" stroke-linejoin="round"/>
<path d="M53.9 452.48L72.97 465.31L92.05 415.91L111.12 468.95L130.2 481.21L149.28 469.72L168.35 418.21L187.43 473.36L206.5 471.63L225.57 464.55L244.65 440.04L263.72 444.82L282.8 465.31L301.88 468.57L320.95 420.31L340.02 454.59L359.1 458.99L378.17 464.55L397.25 415.91L416.32 453.06L435.4 464.55L454.47 464.55L473.55 418.59L492.62 446.93L511.7 467.23L530.77 426.06L549.85 408.82L568.92 451.72L588 469.72L607.07 420.69L626.15 412.46L645.22 453.82L664.3 466.27L683.38 413.23L702.45 413.99L721.52 457.65L740.6 463.97L759.67 412.46L778.75 411.5L797.82 458.42L816.9 464.55" stroke="#1c14a8" stroke-width="1.4" fill="none" stroke-linejoin="round"/>
<rect x="44.55" y="379" width="781.85" height="115.4" fill="none" stroke="#000" stroke-width="1.11"/>
<path d="M53.9 494.4v4.86M130.2 494.4v4.86M206.5 494.4v4.86M282.8 494.4v4.86M359.1 494.4v4.86M435.4 494.4v4.86M511.7 494.4v4.86M588 494.4v4.86M664.3 494.4v4.86M740.6 494.4v4.86M816.9 494.4v4.86M44.55 472.4h-4.86M44.55 434.1h-4.86M44.55 395.8h-4.86" stroke="#000" stroke-width="1.11" fill="none"/>
<text x="35.6" y="476.4" font-size="11.5" text-anchor="end" fill="#1e1e1e" textLength="7.07" lengthAdjust="spacingAndGlyphs">2</text>
<text x="35.6" y="438.1" font-size="11.5" text-anchor="end" fill="#1e1e1e" textLength="7.07" lengthAdjust="spacingAndGlyphs">4</text>
<text x="35.6" y="399.8" font-size="11.5" text-anchor="end" fill="#1e1e1e" textLength="7.07" lengthAdjust="spacingAndGlyphs">6</text>
<text x="44.9" y="517" font-size="12.4" text-anchor="start" fill="#1e1e1e" textLength="129.02" lengthAdjust="spacingAndGlyphs">2m temperature (°C)</text>
<path d="M53.9 521.6V636.6M130.2 521.6V636.6M206.5 521.6V636.6M282.8 521.6V636.6M359.1 521.6V636.6M435.4 521.6V636.6M511.7 521.6V636.6M588 521.6V636.6M664.3 521.6V636.6M740.6 521.6V636.6M816.9 521.6V636.6M44.55 619.7H826.4M44.55 579.7H826.4M44.55 539.7H826.4" stroke="#dadada" stroke-width="0.8" stroke-dasharray="3 1.05" fill="none"/>
<path d="M53.9 617.14V617.14M72.97 548.34V549.94M92.05 578.26V589.22M111.12 606.58V608.18M130.2 619.46V621.06M149.28 546.9V549.7M168.35 582.9V588.5M187.43 607.14V608.74M206.5 616.5V631.22M225.57 542.98V544.58M244.65 582.9V589.3M263.72 608.9V610.5M282.8 609.3V615.7M301.88 542.9V544.5M320.95 582.1V591.7M340.02 604.9V606.1M359.1 608.5V617.3M378.17 542.9V544.5M397.25 578.9V593.3M416.32 602.1V603.7M435.4 612.5V618.9M454.47 546.1V548.5M473.55 587.7V593.3M492.62 606.9V607.7M511.7 607.7V608.9M530.77 536.5V540.1M549.85 586.9V594.1M568.92 601.3V609.3M588 608.5V610.1M607.07 527.3V540.5M626.15 581.78V593.7M645.22 600.26V613.78M664.3 604.98V614.98M683.38 534.1V543.7M702.45 578.98V597.3M721.52 597.3V616.18M740.6 604.98V618.58M759.67 531.7V543.7M778.75 571.94V592.5M797.82 600.82V616.18M816.9 603.7V614.9" stroke="#404040" stroke-width="1.05" fill="none"/>
<path d="M52 617.14H55.8V617.14H52Z" fill="none" stroke="#333" stroke-width="1"/>
<path d="M50.1 617.14H57.7V617.14H50.1Z" fill="none" stroke="#333" stroke-width="1"/>
<path d="M71.07 548.5H74.88V549.78H71.07Z" fill="#94f270" stroke="#0e2008" stroke-width="1.0"/>
<path d="M69.17 548.74H76.77V549.54H69.17Z" fill="none" stroke="#000" stroke-width="1.9"/>
<path d="M90.15 581.04H93.95V587.35H90.15Z" fill="#94f270" stroke="#0e2008" stroke-width="1.0"/>
<path d="M88.25 582.9H95.85V586.1H88.25Z" fill="#94f270" stroke="#0e2008" stroke-width="1.0"/>
<path d="M109.22 606.74H113.03V608.02H109.22Z" fill="#94f270" stroke="#0e2008" stroke-width="1.0"/>
<path d="M107.33 606.98H114.92V607.78H107.33Z" fill="none" stroke="#000" stroke-width="1.9"/>
<path d="M128.3 619.62H132.1V620.9H128.3Z" fill="#94f270" stroke="#0e2008" stroke-width="1.0"/>
<path d="M126.4 619.86H134V620.66H126.4Z" fill="none" stroke="#000" stroke-width="1.9"/>
<path d="M147.38 547.62H151.18V549.46H147.38Z" fill="#94f270" stroke="#0e2008" stroke-width="1.0"/>
<path d="M145.47 548.1H153.08V549.3H145.47Z" fill="#94f270" stroke="#0e2008" stroke-width="1.0"/>
<path d="M166.45 584.1H170.25V587.78H166.45Z" fill="#94f270" stroke="#0e2008" stroke-width="1.0"/>
<path d="M164.55 584.9H172.15V587.3H164.55Z" fill="#94f270" stroke="#0e2008" stroke-width="1.0"/>
<path d="M185.53 607.3H189.33V608.58H185.53Z" fill="#94f270" stroke="#0e2008" stroke-width="1.0"/>
<path d="M183.62 607.54H191.23V608.34H183.62Z" fill="none" stroke="#000" stroke-width="1.9"/>
<path d="M204.6 618.66H208.4V626.95H204.6Z" fill="#94f270" stroke="#0e2008" stroke-width="1.0"/>
<path d="M202.7 620.1H210.3V624.1H202.7Z" fill="#94f270" stroke="#0e2008" stroke-width="1.0"/>
<path d="M223.67 543.14H227.47V544.42H223.67Z" fill="#94f270" stroke="#0e2008" stroke-width="1.0"/>
<path d="M221.77 543.38H229.38V544.18H221.77Z" fill="none" stroke="#000" stroke-width="1.9"/>
<path d="M242.75 584.34H246.55V588.58H242.75Z" fill="#94f270" stroke="#0e2008" stroke-width="1.0"/>
<path d="M240.85 585.3H248.45V588.1H240.85Z" fill="#94f270" stroke="#0e2008" stroke-width="1.0"/>
<path d="M261.82 609.06H265.62V610.34H261.82Z" fill="#94f270" stroke="#0e2008" stroke-width="1.0"/>
<path d="M259.92 609.3H267.52V610.1H259.92Z" fill="none" stroke="#000" stroke-width="1.9"/>
<path d="M280.9 610.26H284.7V614.5H280.9Z" fill="#94f270" stroke="#0e2008" stroke-width="1.0"/>
<path d="M279 610.9H286.6V613.7H279Z" fill="#94f270" stroke="#0e2008" stroke-width="1.0"/>
<path d="M299.98 543.28H303.77V544.26H299.98Z" fill="none" stroke="#000" stroke-width="1.9"/>
<path d="M298.07 543.54H305.68V544.1H298.07Z" fill="none" stroke="#000" stroke-width="1.9"/>
<path d="M319.05 583.54H322.85V590.58H319.05Z" fill="#94f270" stroke="#0e2008" stroke-width="1.0"/>
<path d="M317.15 584.9H324.75V589.7H317.15Z" fill="#94f270" stroke="#0e2008" stroke-width="1.0"/>
<path d="M338.12 605.14H341.92V606H338.12Z" fill="none" stroke="#000" stroke-width="1.9"/>
<path d="M336.22 605.3H343.82V605.94H336.22Z" fill="none" stroke="#000" stroke-width="1.9"/>
<path d="M357.2 609.94H361V615.62H357.2Z" fill="#94f270" stroke="#0e2008" stroke-width="1.0"/>
<path d="M355.3 610.9H362.9V614.5H355.3Z" fill="#94f270" stroke="#0e2008" stroke-width="1.0"/>
<path d="M376.27 543.28H380.07V544.26H376.27Z" fill="none" stroke="#000" stroke-width="1.9"/>
<path d="M374.37 543.54H381.97V544.1H374.37Z" fill="none" stroke="#000" stroke-width="1.9"/>
<path d="M395.35 580.74H399.15V592.02H395.35Z" fill="#94f270" stroke="#0e2008" stroke-width="1.0"/>
<path d="M393.45 582.9H401.05V590.9H393.45Z" fill="#94f270" stroke="#0e2008" stroke-width="1.0"/>
<path d="M414.43 602.48H418.22V603.46H414.43Z" fill="none" stroke="#000" stroke-width="1.9"/>
<path d="M412.52 602.74H420.12V603.3H412.52Z" fill="none" stroke="#000" stroke-width="1.9"/>
<path d="M433.5 613.7H437.3V618.18H433.5Z" fill="#94f270" stroke="#0e2008" stroke-width="1.0"/>
<path d="M431.6 614.5H439.2V617.7H431.6Z" fill="#94f270" stroke="#0e2008" stroke-width="1.0"/>
<path d="M452.57 546.96H456.37V548.26H452.57Z" fill="#94f270" stroke="#0e2008" stroke-width="1.0"/>
<path d="M450.67 547.54H458.27V548.1H450.67Z" fill="none" stroke="#000" stroke-width="1.9"/>
<path d="M471.65 588.42H475.45V592.58H471.65Z" fill="#94f270" stroke="#0e2008" stroke-width="1.0"/>
<path d="M469.75 588.9H477.35V592.1H469.75Z" fill="#94f270" stroke="#0e2008" stroke-width="1.0"/>
<path d="M490.72 607.09H494.52V607.6H490.72Z" fill="none" stroke="#000" stroke-width="1.9"/>
<path d="M488.82 607.22H496.42V607.54H488.82Z" fill="none" stroke="#000" stroke-width="1.9"/>
<path d="M509.8 607.89H513.6V608.66H509.8Z" fill="none" stroke="#000" stroke-width="1.9"/>
<path d="M507.9 608.02H515.5V608.5H507.9Z" fill="none" stroke="#000" stroke-width="1.9"/>
<path d="M528.88 536.98H532.67V539.86H528.88Z" fill="#94f270" stroke="#0e2008" stroke-width="1.0"/>
<path d="M526.98 537.3H534.57V539.7H526.98Z" fill="#94f270" stroke="#0e2008" stroke-width="1.0"/>
<path d="M547.95 588.58H551.75V593.38H547.95Z" fill="#94f270" stroke="#0e2008" stroke-width="1.0"/>
<path d="M546.05 589.7H553.65V592.9H546.05Z" fill="#94f270" stroke="#0e2008" stroke-width="1.0"/>
<path d="M567.02 605.38H570.82V609.06H567.02Z" fill="#94f270" stroke="#0e2008" stroke-width="1.0"/>
<path d="M565.12 608.1H572.72V608.9H565.12Z" fill="none" stroke="#000" stroke-width="1.9"/>
<path d="M586.1 608.69H589.9V609.76H586.1Z" fill="#94f270" stroke="#0e2008" stroke-width="1.0"/>
<path d="M584.2 608.82H591.8V609.54H584.2Z" fill="none" stroke="#000" stroke-width="1.9"/>
<path d="M605.17 531.3H608.97V539.3H605.17Z" fill="#94f270" stroke="#0e2008" stroke-width="1.0"/>
<path d="M603.27 533.7H610.87V538.58H603.27Z" fill="#94f270" stroke="#0e2008" stroke-width="1.0"/>
<path d="M624.25 584.66H628.05V592.5H624.25Z" fill="#94f270" stroke="#0e2008" stroke-width="1.0"/>
<path d="M622.35 586.1H629.95V591.7H622.35Z" fill="#94f270" stroke="#0e2008" stroke-width="1.0"/>
<path d="M643.32 603.22H647.12V612.66H643.32Z" fill="#94f270" stroke="#0e2008" stroke-width="1.0"/>
<path d="M641.42 604.9H649.02V610.9H641.42Z" fill="#94f270" stroke="#0e2008" stroke-width="1.0"/>
<path d="M662.4 604.98H666.2V610.82H662.4Z" fill="#94f270" stroke="#0e2008" stroke-width="1.0"/>
<path d="M660.5 606.5H668.1V610.1H660.5Z" fill="#94f270" stroke="#0e2008" stroke-width="1.0"/>
<path d="M681.48 535.7H685.27V543.3H681.48Z" fill="#94f270" stroke="#0e2008" stroke-width="1.0"/>
<path d="M679.58 537.3H687.17V542.1H679.58Z" fill="#94f270" stroke="#0e2008" stroke-width="1.0"/>
<path d="M700.55 585.38H704.35V593.7H700.55Z" fill="#94f270" stroke="#0e2008" stroke-width="1.0"/>
<path d="M698.65 587.7H706.25V592.5H698.65Z" fill="#94f270" stroke="#0e2008" stroke-width="1.0"/>
<path d="M719.62 604.5H723.42V614.98H719.62Z" fill="#94f270" stroke="#0e2008" stroke-width="1.0"/>
<path d="M717.73 609.06H725.32V614.98H717.73Z" fill="#94f270" stroke="#0e2008" stroke-width="1.0"/>
<path d="M738.7 605.54H742.5V613.78H738.7Z" fill="#94f270" stroke="#0e2008" stroke-width="1.0"/>
<path d="M736.8 607.3H744.4V612.1H736.8Z" fill="#94f270" stroke="#0e2008" stroke-width="1.0"/>
<path d="M757.77 534.1H761.57V542.9H757.77Z" fill="#94f270" stroke="#0e2008" stroke-width="1.0"/>
<path d="M755.88 536.5H763.47V542.1H755.88Z" fill="#94f270" stroke="#0e2008" stroke-width="1.0"/>
<path d="M776.85 584.18H780.65V591.78H776.85Z" fill="#94f270" stroke="#0e2008" stroke-width="1.0"/>
<path d="M774.95 585.3H782.55V590.1H774.95Z" fill="#94f270" stroke="#0e2008" stroke-width="1.0"/>
<path d="M795.92 604.42H799.72V614.98H795.92Z" fill="#94f270" stroke="#0e2008" stroke-width="1.0"/>
<path d="M794.02 606.9H801.62V612.5H794.02Z" fill="#94f270" stroke="#0e2008" stroke-width="1.0"/>
<path d="M815 604.66H818.8V611.06H815Z" fill="#94f270" stroke="#0e2008" stroke-width="1.0"/>
<path d="M813.1 605.3H820.7V608.5H813.1Z" fill="#94f270" stroke="#0e2008" stroke-width="1.0"/>
<path d="M50.1 617.14H57.7M69.17 549.14H76.77M88.25 584.42H95.85M107.33 607.38H114.92M126.4 620.26H134M145.47 548.9H153.08M164.55 586.1H172.15M183.62 607.94H191.23M202.7 622.42H210.3M221.77 543.78H229.38M240.85 586.9H248.45M259.92 609.7H267.52M279 612.18H286.6M298.07 543.78H305.68M317.15 587.06H324.75M336.22 605.62H343.82M355.3 612.66H362.9M374.37 543.78H381.97M393.45 586.9H401.05M412.52 602.98H420.12M431.6 616.18H439.2M450.67 547.86H458.27M469.75 590.58H477.35M488.82 607.38H496.42M507.9 608.26H515.5M526.98 538.5H534.57M546.05 591.54H553.65M565.12 608.58H572.72M584.2 609.22H591.8M603.27 536.1H610.87M622.35 588.9H629.95M641.42 607.94H649.02M660.5 608.1H668.1M679.58 540.1H687.17M698.65 590.1H706.25M717.73 611.46H725.32M736.8 609.3H744.4M755.88 539.7H763.47M774.95 587.7H782.55M794.02 609.06H801.62M813.1 606.9H820.7" stroke="#0e2008" stroke-width="1.0" fill="none"/>
<path d="M53.9 617.14L72.97 549.14L92.05 584.66L111.12 607.38L130.2 620.26L149.28 548.9L168.35 586.18L187.43 607.94L206.5 619.7L225.57 543.78L244.65 585.3L263.72 609.7L282.8 610.66L301.88 544.34L320.95 582.66L340.02 604.5L359.1 614.5L378.17 546.5L397.25 578.26L416.32 602.98L435.4 618.02L454.47 547.86L473.55 590.58L492.62 607.38L511.7 608.26L530.77 540.5L549.85 590.9L568.92 608.26L588 609.22L607.07 538.1L626.15 589.7L645.22 608.74L664.3 607.7L683.38 545.62L702.45 593.3L721.52 613.62L740.6 611.22L759.67 542.9L778.75 589.78L797.82 616.18L816.9 609.38" stroke="#c81e1e" stroke-width="1.4" fill="none" stroke-linejoin="round"/>
<path d="M53.9 617.14L72.97 549.14L92.05 584.66L111.12 607.38L130.2 620.26L149.28 548.9L168.35 586.18L187.43 607.94L206.5 619.7L225.57 543.78L244.65 588.02L263.72 609.7L282.8 610.66L301.88 544.34L320.95 587.06L340.02 605.62L359.1 611.94L378.17 544.5L397.25 586.1L416.32 602.98L435.4 614.18L454.47 547.86L473.55 590.58L492.62 607.38L511.7 608.26L530.77 540.5L549.85 591.54L568.92 608.26L588 609.22L607.07 538.1L626.15 589.7L645.22 608.74L664.3 608.5L683.38 542.1L702.45 590.58L721.52 610.9L740.6 609.94L759.67 541.38L778.75 588.02L797.82 609.22L816.9 606.9" stroke="#1c14a8" stroke-width="1.4" fill="none" stroke-linejoin="round"/>
<rect x="44.55" y="521.6" width="781.85" height="115" fill="none" stroke="#000" stroke-width="1.11"/>
<path d="M53.9 636.6v4.86M130.2 636.6v4.86M206.5 636.6v4.86M282.8 636.6v4.86M359.1 636.6v4.86M435.4 636.6v4.86M511.7 636.6v4.86M588 636.6v4.86M664.3 636.6v4.86M740.6 636.6v4.86M816.9 636.6v4.86M44.55 619.7h-4.86M44.55 579.7h-4.86M44.55 539.7h-4.86" stroke="#000" stroke-width="1.11" fill="none"/>
<text x="35.6" y="623.7" font-size="11.5" text-anchor="end" fill="#1e1e1e" textLength="14.14" lengthAdjust="spacingAndGlyphs">25</text>
<text x="35.6" y="583.7" font-size="11.5" text-anchor="end" fill="#1e1e1e" textLength="14.14" lengthAdjust="spacingAndGlyphs">30</text>
<text x="35.6" y="543.7" font-size="11.5" text-anchor="end" fill="#1e1e1e" textLength="14.14" lengthAdjust="spacingAndGlyphs">35</text>
<text x="53.9" y="654.8" font-size="11.5" text-anchor="middle" fill="#1e1e1e" textLength="21.75" lengthAdjust="spacingAndGlyphs">00Z</text>
<text x="53.9" y="666.6" font-size="11.5" text-anchor="middle" fill="#1e1e1e" textLength="35.1" lengthAdjust="spacingAndGlyphs">29Mar</text>
<text x="130.2" y="654.8" font-size="11.5" text-anchor="middle" fill="#1e1e1e" textLength="21.75" lengthAdjust="spacingAndGlyphs">00Z</text>
<text x="130.2" y="666.6" font-size="11.5" text-anchor="middle" fill="#1e1e1e" textLength="35.1" lengthAdjust="spacingAndGlyphs">30Mar</text>
<text x="206.5" y="654.8" font-size="11.5" text-anchor="middle" fill="#1e1e1e" textLength="21.75" lengthAdjust="spacingAndGlyphs">00Z</text>
<text x="206.5" y="666.6" font-size="11.5" text-anchor="middle" fill="#1e1e1e" textLength="35.1" lengthAdjust="spacingAndGlyphs">31Mar</text>
<text x="282.8" y="654.8" font-size="11.5" text-anchor="middle" fill="#1e1e1e" textLength="21.75" lengthAdjust="spacingAndGlyphs">00Z</text>
<text x="282.8" y="666.6" font-size="11.5" text-anchor="middle" fill="#1e1e1e" textLength="33.36" lengthAdjust="spacingAndGlyphs">01Apr</text>
<text x="359.1" y="654.8" font-size="11.5" text-anchor="middle" fill="#1e1e1e" textLength="21.75" lengthAdjust="spacingAndGlyphs">00Z</text>
<text x="359.1" y="666.6" font-size="11.5" text-anchor="middle" fill="#1e1e1e" textLength="33.36" lengthAdjust="spacingAndGlyphs">02Apr</text>
<text x="435.4" y="654.8" font-size="11.5" text-anchor="middle" fill="#1e1e1e" textLength="21.75" lengthAdjust="spacingAndGlyphs">00Z</text>
<text x="435.4" y="666.6" font-size="11.5" text-anchor="middle" fill="#1e1e1e" textLength="33.36" lengthAdjust="spacingAndGlyphs">03Apr</text>
<text x="511.7" y="654.8" font-size="11.5" text-anchor="middle" fill="#1e1e1e" textLength="21.75" lengthAdjust="spacingAndGlyphs">00Z</text>
<text x="511.7" y="666.6" font-size="11.5" text-anchor="middle" fill="#1e1e1e" textLength="33.36" lengthAdjust="spacingAndGlyphs">04Apr</text>
<text x="588" y="654.8" font-size="11.5" text-anchor="middle" fill="#1e1e1e" textLength="21.75" lengthAdjust="spacingAndGlyphs">00Z</text>
<text x="588" y="666.6" font-size="11.5" text-anchor="middle" fill="#1e1e1e" textLength="33.36" lengthAdjust="spacingAndGlyphs">05Apr</text>
<text x="664.3" y="654.8" font-size="11.5" text-anchor="middle" fill="#1e1e1e" textLength="21.75" lengthAdjust="spacingAndGlyphs">00Z</text>
<text x="664.3" y="666.6" font-size="11.5" text-anchor="middle" fill="#1e1e1e" textLength="33.36" lengthAdjust="spacingAndGlyphs">06Apr</text>
<text x="740.6" y="654.8" font-size="11.5" text-anchor="middle" fill="#1e1e1e" textLength="21.75" lengthAdjust="spacingAndGlyphs">00Z</text>
<text x="740.6" y="666.6" font-size="11.5" text-anchor="middle" fill="#1e1e1e" textLength="33.36" lengthAdjust="spacingAndGlyphs">07Apr</text>
<text x="816.9" y="654.8" font-size="11.5" text-anchor="middle" fill="#1e1e1e" textLength="21.75" lengthAdjust="spacingAndGlyphs">00Z</text>
<text x="816.9" y="666.6" font-size="11.5" text-anchor="middle" fill="#1e1e1e" textLength="33.36" lengthAdjust="spacingAndGlyphs">08Apr</text>
</g></svg>
</body></html>
